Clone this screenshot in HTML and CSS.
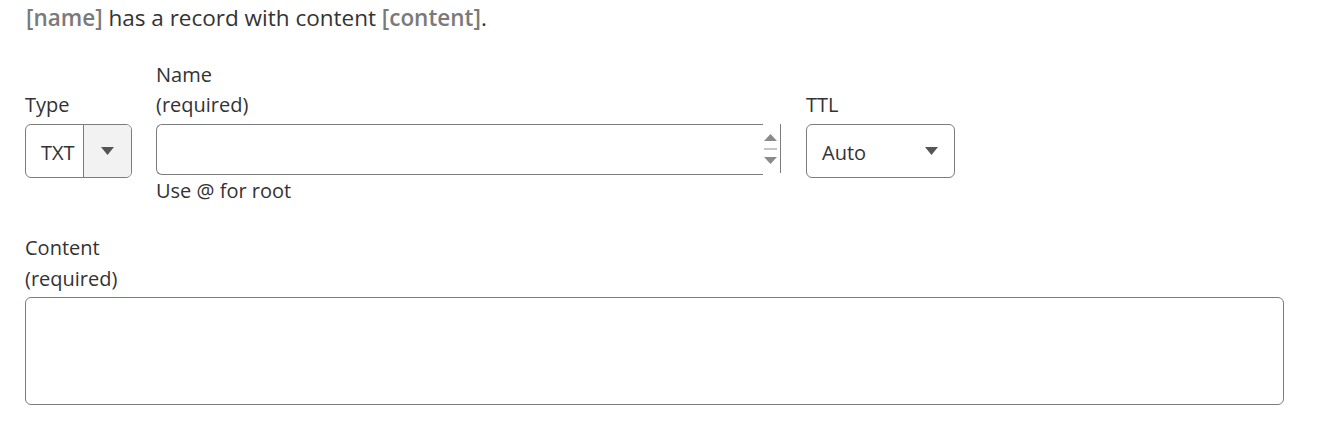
FILE: index.html
```html
<!DOCTYPE html>
<html lang="en">
<head>
<meta charset="utf-8">
<title>DNS record</title>
<link rel="stylesheet" href="styles.css">
</head>
<body>
<div class="page">
  <p class="summary"><b class="ph">[name]</b> has a record with content <b class="ph">[content]</b>.</p>

  <div class="row">
    <label class="lbl lbl-type" for="type">Type</label>
    <label class="lbl lbl-name" for="name">Name<br>(required)</label>
    <label class="lbl lbl-ttl" for="ttl">TTL</label>

    <div class="select type-select" id="type">
      <span class="sel-val">TXT</span>
      <span class="sel-btn"><svg width="13" height="8" viewBox="0 0 13 8"><path d="M0 0H13L6.5 8Z" fill="#555"/></svg></span>
    </div>

    <div class="name-wrap">
      <input class="name-input" id="name" type="text">
      <span class="spin">
        <svg width="15" height="40" viewBox="0 0 15 40">
          <path d="M1 12H14L7.5 5Z" fill="#8a8a8a"/>
          <path d="M1 20H14" stroke="#8a8a8a" stroke-width="1"/>
          <path d="M1 28H14L7.5 35Z" fill="#8a8a8a"/>
        </svg>
      </span>
    </div>

    <div class="select ttl-select" id="ttl">
      <span class="sel-val">Auto</span>
      <svg class="ttl-arrow" width="13" height="8" viewBox="0 0 13 8"><path d="M0 0H13L6.5 8Z" fill="#555"/></svg>
    </div>

    <div class="hint">Use @ for root</div>
  </div>

  <div class="content-field">
    <label class="lbl" for="content">Content<br>(required)</label>
    <textarea class="content-area" id="content"></textarea>
  </div>
</div>
</body>
</html>
```

FILE: styles.css
```css
* { box-sizing: border-box; }
html, body { margin: 0; padding: 0; background: #fff; }
body {
  font-family: "Open Sans", "Noto Sans", sans-serif;
  font-size: 20px;
  line-height: 30px;
  color: #333;
}
.page { padding: 3px 25px 0 25px; }
.summary { margin: 0 0 27px 1px; font-size: 22.5px; }
.ph { color: #7a7a7a; font-weight: 600; }

.row {
  display: grid;
  grid-template-columns: 107px 625px 150px;
  column-gap: 24px;
  grid-template-rows: auto auto auto;
}
.lbl { display: block; }
.lbl-type { grid-column: 1; grid-row: 1; align-self: end; }
.lbl-name { grid-column: 2; grid-row: 1; }
.lbl-ttl { grid-column: 3; grid-row: 1; align-self: end; margin-left: 1px; }
.row .lbl { margin-bottom: 4px; }

.select {
  height: 54px;
  border: 1px solid #7c7c7c;
  border-radius: 6px;
  display: flex;
  align-items: center;
  background: #fff;
}
.sel-val { padding-top: 3px; }
.type-select { grid-column: 1; grid-row: 2; overflow: hidden; }
.type-select .sel-val { width: 57px; padding-left: 15px; }
.sel-btn {
  flex: 1;
  align-self: stretch;
  border-left: 1px solid #7c7c7c;
  background: #f2f2f2;
  display: flex;
  align-items: center;
  justify-content: center;
}
.ttl-select { grid-column: 3; grid-row: 2; padding: 0 16px 0 15px; justify-content: space-between; margin-left: 1px; }

.name-wrap {
  grid-column: 2;
  grid-row: 2;
  display: flex;
  height: 51px;
}
.name-input {
  flex: 1;
  height: 51px;
  border: 1px solid #7c7c7c;
  border-right: none;
  border-radius: 6px 0 0 6px;
  font: inherit;
  padding: 0 12px;
  outline: none;
}
.spin {
  width: 18px;
  height: 49px;
  border-right: 1px solid #7c7c7c;
  display: flex;
  align-items: center;
  justify-content: flex-start;
}
.hint { grid-column: 2; grid-row: 3; margin-top: -2px; }

.content-field { margin-top: 26px; }
.content-field .lbl { margin-bottom: 3px; line-height: 31px; }
.content-area {
  display: block;
  width: 1259px;
  height: 108px;
  border: 1px solid #7c7c7c;
  border-radius: 6px;
  resize: none;
  font: inherit;
  outline: none;
}
```
